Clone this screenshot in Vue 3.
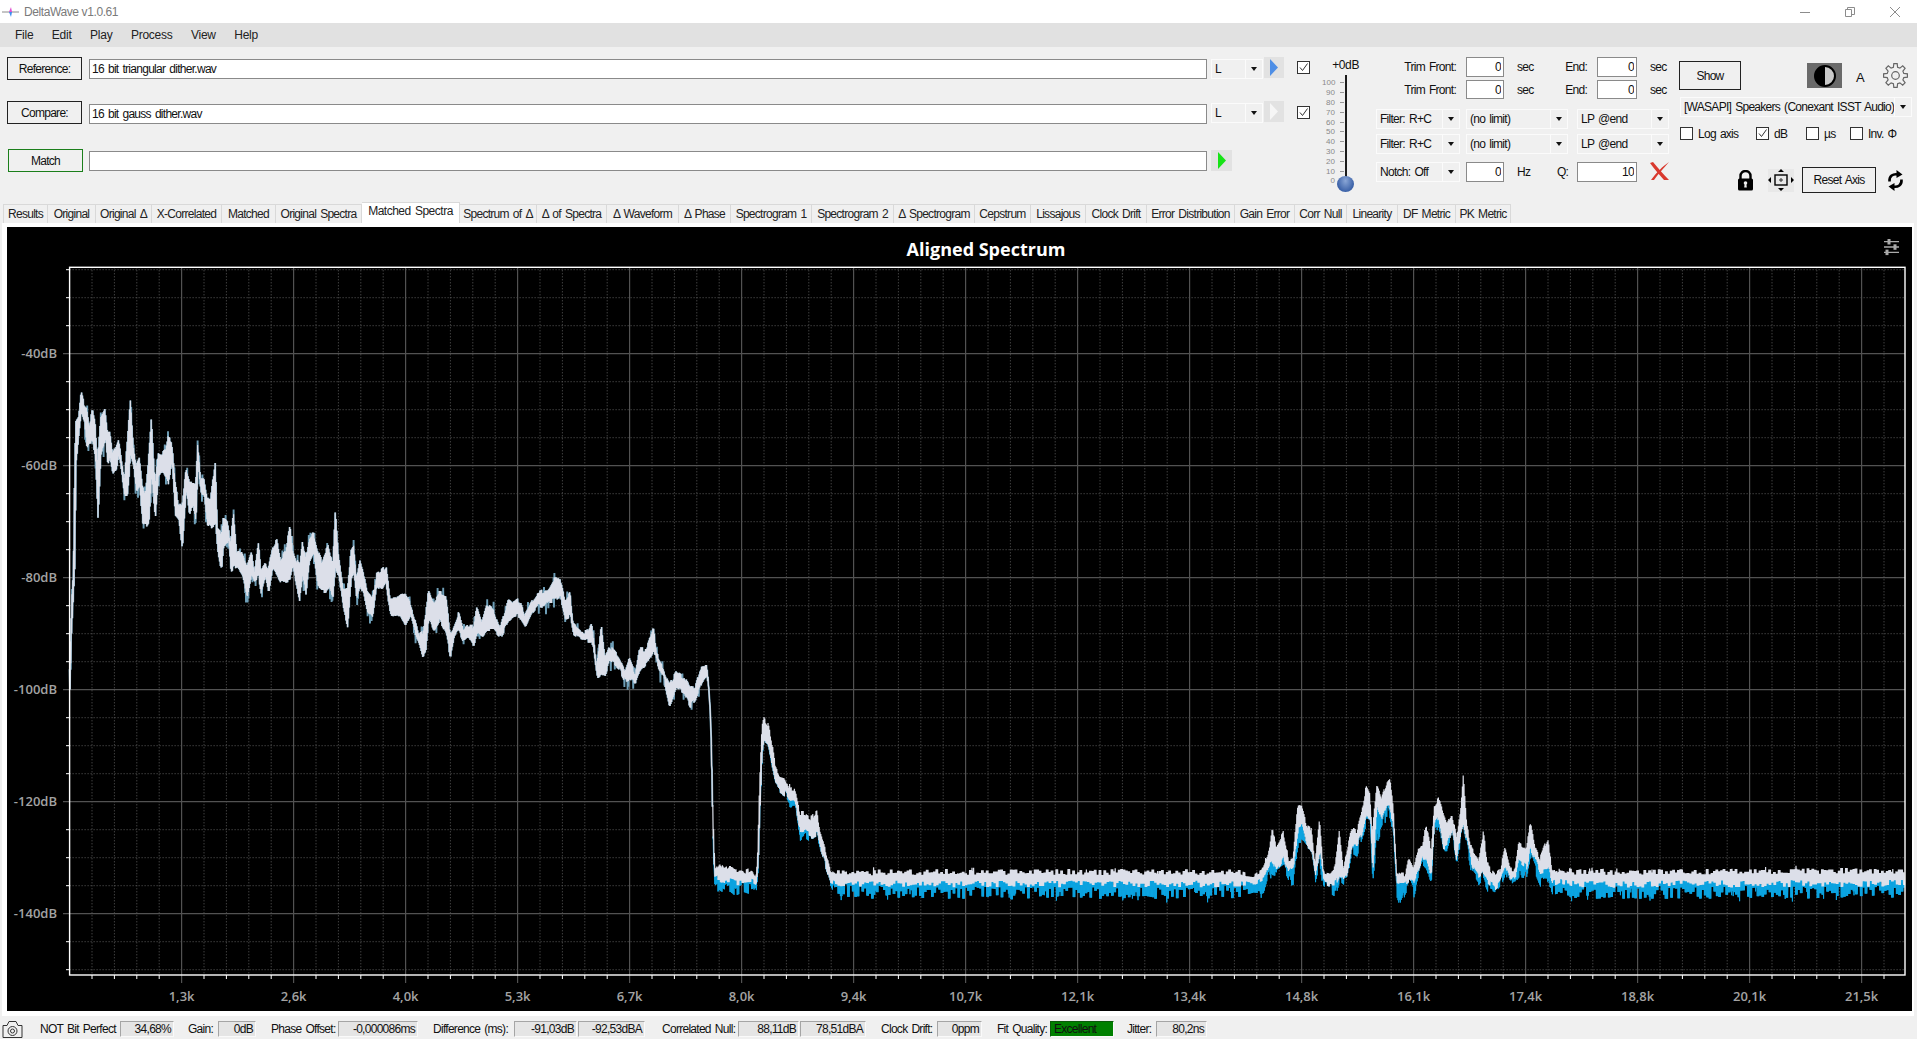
<template>
  <div class="app">
    <header class="titlebar">
      <svg class="app-icon" width="18" height="12" viewBox="0 0 18 12">
        <path d="M0 6h17" stroke="#8a8a8a" stroke-width="1" />
        <path d="M7 6l2-5 1 5z" fill="#e04fd0" />
        <path d="M7 6l2 5 1-5z" fill="#3d8df0" />
      </svg>
      <span class="app-name">DeltaWave v1.0.61</span>
      <div class="win-btns">
        <svg width="10" height="10" viewBox="0 0 10 10"><path d="M0 5.500h10" stroke="#8c8c8c" /></svg>
        <svg width="10" height="10" viewBox="0 0 10 10" fill="none" stroke="#8c8c8c">
          <path d="M.5 2.500h6v7h-6zM2.500 2.500v-2h7v7h-3" />
        </svg>
        <svg width="10" height="10" viewBox="0 0 10 10"><path d="M0 0l10 10M10 0L0 10" stroke="#8c8c8c" /></svg>
      </div>
    </header>

    <nav class="menubar">
      <span v-for="m in menus" :key="m">{{ m }}</span>
    </nav>

    <section class="panel">
      <div class="files">
        <div class="file-row">
          <button class="btn file-btn">Reference:</button>
          <input class="path" value="16 bit triangular dither.wav" readonly />
          <div class="combo ch"><span>L</span><i></i></div>
          <div class="play"><svg width="10" height="17" viewBox="0 0 10 17"><path d="M1 0l8 8.500-8 8.500z" fill="#4f8fe6" /></svg></div>
        </div>
        <div class="file-row second">
          <button class="btn file-btn">Compare:</button>
          <input class="path" value="16 bit gauss dither.wav" readonly />
          <div class="combo ch"><span>L</span><i></i></div>
          <div class="play"><svg width="10" height="17" viewBox="0 0 10 17"><path d="M1 0l8 8.500-8 8.500z" fill="#f6f6f6" /></svg></div>
        </div>
        <div class="file-row third">
          <button class="btn file-btn match">Match</button>
          <input class="path" value="" readonly />
          <div class="play green"><svg width="10" height="17" viewBox="0 0 10 17"><path d="M1 0l8 8.500-8 8.500z" fill="#16e316" /></svg></div>
        </div>
      </div>

      <div class="file-checks">
        <span class="check on"><svg viewBox="0 0 11 11"><path d="M2 5.500l2.500 3L9.500 1.500" fill="none" stroke="#333" /></svg></span>
        <span class="check on"><svg viewBox="0 0 11 11"><path d="M2 5.500l2.500 3L9.500 1.500" fill="none" stroke="#333" /></svg></span>
      </div>

      <div class="level">
        <div class="level-title">+0dB</div>
        <div class="scale">
          <div v-for="s in levelScale" :key="s" class="scale-row"><span>{{ s }}</span><i></i></div>
          <div class="track"></div>
          <div class="thumb"></div>
        </div>
      </div>

      <div class="trim">
        <div class="trim-row">
          <label class="trim-label">Trim Front:</label>
          <input class="num w38" value="0" readonly />
          <span class="unit">sec</span>
          <label class="end-label">End:</label>
          <input class="num w40" value="0" readonly />
          <span class="unit">sec</span>
        </div>
        <div class="trim-row row2">
          <label class="trim-label">Trim Front:</label>
          <input class="num w38" value="0" readonly />
          <span class="unit">sec</span>
          <label class="end-label">End:</label>
          <input class="num w40" value="0" readonly />
          <span class="unit">sec</span>
        </div>
        <div class="filter-row first">
          <div class="combo f1"><span>Filter: R+C</span><i></i></div>
          <div class="combo f2"><span>(no limit)</span><i></i></div>
          <div class="combo f3"><span>LP @end</span><i></i></div>
        </div>
        <div class="filter-row next">
          <div class="combo f1"><span>Filter: R+C</span><i></i></div>
          <div class="combo f2"><span>(no limit)</span><i></i></div>
          <div class="combo f3"><span>LP @end</span><i></i></div>
        </div>
        <div class="notch-row">
          <div class="combo f1"><span>Notch: Off</span><i></i></div>
          <input class="num w38" value="0" readonly />
          <span class="unit">Hz</span>
          <label class="q-label">Q:</label>
          <input class="num w60" value="10" readonly />
          <svg class="red-x" width="19" height="18" viewBox="0 0 19 18" fill="#d9392e">
            <path d="M0 1l3-1c5 6 10 12 16 18h-5C9 12 4 7 0 1z" />
            <path d="M19 0C13 4 6 11 1 18h3C8 12 14 6 19 0z" />
          </svg>
        </div>
      </div>

      <div class="side">
        <div class="show-row">
          <button class="btn show">Show</button>
          <div class="contrast">
            <svg width="24" height="24" viewBox="0 0 24 24">
              <circle cx="12" cy="12" r="10" fill="#c9c9c9" stroke="#000" stroke-width="2" />
              <path d="M12 2a10 10 0 0 0 0 20z" fill="#000" />
            </svg>
          </div>
          <span class="auto">A</span>
          <svg class="gear" width="25" height="25" viewBox="0 0 25 25">
            <path :d="gearPath" fill="none" stroke="#666" stroke-width="1.200" />
            <circle cx="12.500" cy="12.500" r="3.800" fill="none" stroke="#666" stroke-width="1.200" />
          </svg>
        </div>
        <div class="combo device"><span>[WASAPI] Speakers (Conexant ISST Audio)</span><i></i></div>
        <div class="axis-opts">
          <span class="opt log"><span class="check"></span>Log axis</span>
          <span class="opt db">
            <span class="check on"><svg viewBox="0 0 11 11"><path d="M2 5.500l2.500 3L9.500 1.500" fill="none" stroke="#333" /></svg></span>dB
          </span>
          <span class="opt us"><span class="check"></span>µs</span>
          <span class="opt inv"><span class="check"></span>Inv. Φ</span>
        </div>
        <div class="axis-tools">
          <svg width="17" height="21" viewBox="0 0 17 21">
            <path d="M3.500 9V6a5 5 0 0 1 10 0v3" fill="none" stroke="#000" stroke-width="2.400" />
            <rect x="1" y="8.500" width="15" height="12" rx="1.500" fill="#000" />
            <circle cx="8.500" cy="13" r="1.800" fill="#eee" />
            <path d="M7.700 13.500h1.600l.5 4h-2.600z" fill="#eee" />
          </svg>
          <div class="move">
            <svg width="26" height="22" viewBox="0 0 26 22">
              <path d="M13 0l3 3h-6zM13 22l-3-3h6zM0 11l3-3v6zM26 11l-3 3V8z" fill="#000" />
              <rect x="7" y="6" width="12" height="10" fill="none" stroke="#000" stroke-width="1.400" />
              <path d="M13 9v4M11 11h4" stroke="#333" />
            </svg>
          </div>
          <button class="btn reset">Reset Axis</button>
          <svg class="refresh" width="17" height="23" viewBox="0 0 17 23">
            <path d="M2.500 12.500C2 7 6 4.500 11 5.500" fill="none" stroke="#000" stroke-width="2.600" />
            <path d="M9.500 1l6 4.500-6 3.500z" fill="#000" />
            <path d="M14.500 10.500C15 16 11 18.500 6 17.500" fill="none" stroke="#000" stroke-width="2.600" />
            <path d="M7.500 22l-6-4.500 6-3.500z" fill="#000" />
          </svg>
        </div>
      </div>
    </section>

    <div class="tabs">
      <div
        v-for="t in tabs"
        :key="t.name"
        class="tab"
        :class="{ active: t.name === activeTab }"
        :style="{ width: t.w + 'px' }"
      >{{ t.name }}</div>
    </div>

    <main class="tab-page">
      <div class="plot">
        <svg class="chart" viewBox="7 227 1905 784" width="1905" height="784">
          <text x="986" y="256" class="chart-title" text-anchor="middle">Aligned Spectrum</text>
          <g stroke="#aaa" stroke-width="1.300">
            <path d="M1884 241.700h15M1884 247h15M1884 252.300h15" />
          </g>
          <g fill="#aaa">
            <rect x="1887.500" y="239" width="3" height="5.500" />
            <rect x="1893.500" y="244.300" width="3" height="5.500" />
            <rect x="1885.500" y="249.600" width="3" height="5.500" />
          </g>

          <path :d="minorGrid" stroke="#5c5c5c" stroke-width="1" stroke-dasharray="1 2" fill="none" />
          <path :d="majorGrid" stroke="#525252" stroke-width="1.200" fill="none" />

          <path :d="traces.edge" stroke="#6f9fb8" stroke-width="1.900" fill="none" />
          <path :d="traces.blue" stroke="#0ba5e3" stroke-width="1" fill="none" />
          <path :d="traces.light" stroke="#dcdfe9" stroke-width="1.200" fill="none" />

          <path :d="axisTicks" stroke="#fff" stroke-width="1" fill="none" />
          <rect x="69.600" y="267.300" width="1835.400" height="707.700" fill="none" stroke="#fff" stroke-width="1.400" />

          <text v-for="l in yLabels" :key="l.text" x="57" :y="l.y + 4" class="axis-label" text-anchor="end">{{ l.text }}</text>
          <text v-for="l in xLabels" :key="l.text" :x="l.x" y="1001" class="axis-label" text-anchor="middle">{{ l.text }}</text>
        </svg>
      </div>
    </main>

    <footer class="status">
      <svg class="camera" width="21" height="18" viewBox="0 0 21 18" fill="none" stroke="#333">
        <path d="M1 5.500h4l2-4h7l2 4h4v12H1z" />
        <circle cx="10.500" cy="11" r="4.500" />
        <circle cx="10.500" cy="11" r="2" />
      </svg>
      <div v-for="s in stats" :key="s.label" class="stat" :style="{ marginLeft: s.gap + 'px' }">
        <span class="stat-label" :style="{ width: s.lw + 'px' }">{{ s.label }}</span>
        <span
          v-for="f in s.fields"
          :key="f.v"
          class="field"
          :class="{ good: f.good }"
          :style="{ width: f.w + 'px' }"
        >{{ f.v }}</span>
      </div>
    </footer>
  </div>
</template>

<script setup>
const menus = ['File', 'Edit', 'Play', 'Process', 'View', 'Help']
const levelScale = [100, 90, 80, 70, 60, 50, 40, 30, 20, 10, 0]
const activeTab = 'Matched Spectra'

const tabs = [
  { name: 'Results', w: 45 }, { name: 'Original', w: 48 }, { name: 'Original Δ', w: 56 },
  { name: 'X-Correlated', w: 70 }, { name: 'Matched', w: 54 }, { name: 'Original Spectra', w: 86 },
  { name: 'Matched Spectra', w: 98 }, { name: 'Spectrum of Δ', w: 77 }, { name: 'Δ of Spectra', w: 70 },
  { name: 'Δ Waveform', w: 72 }, { name: 'Δ Phase', w: 52 }, { name: 'Spectrogram 1', w: 81 },
  { name: 'Spectrogram 2', w: 82 }, { name: 'Δ Spectrogram', w: 81 }, { name: 'Cepstrum', w: 56 },
  { name: 'Lissajous', w: 55 }, { name: 'Clock Drift', w: 61 }, { name: 'Error Distribution', w: 88 },
  { name: 'Gain Error', w: 60 }, { name: 'Corr Null', w: 52 }, { name: 'Linearity', w: 51 },
  { name: 'DF Metric', w: 58 }, { name: 'PK Metric', w: 55 }
]

const stats = [
  { label: 'NOT Bit Perfect', gap: 17, lw: 79, fields: [{ v: '34,68%', w: 54 }] },
  { label: 'Gain:', gap: 14, lw: 29, fields: [{ v: '0dB', w: 38 }] },
  { label: 'Phase Offset:', gap: 15, lw: 66, fields: [{ v: '-0,000086ms', w: 80 }] },
  { label: 'Difference (ms):', gap: 15, lw: 80, fields: [{ v: '-91,03dB', w: 63 }, { v: '-92,53dBA', w: 67 }] },
  { label: 'Correlated Null:', gap: 17, lw: 75, fields: [{ v: '88,11dB', w: 61 }, { v: '78,51dBA', w: 66 }] },
  { label: 'Clock Drift:', gap: 15, lw: 55, fields: [{ v: '0ppm', w: 45 }] },
  { label: 'Fit Quality:', gap: 15, lw: 52, fields: [{ v: 'Excellent', w: 64, good: true }] },
  { label: 'Jitter:', gap: 13, lw: 28, fields: [{ v: '80,2ns', w: 51 }] }
]

// gear outline, 8 teeth
function makeGear(cx, cy, ro, ri, teeth) {
  const pts = []
  for (let i = 0; i < teeth; i++) {
    const a = (i / teeth) * Math.PI * 2
    const step = (Math.PI * 2) / teeth
    for (const [off, r] of [[-0.32, ri], [-0.18, ro], [0.18, ro], [0.32, ri]]) {
      const t = a + off * step
      pts.push((cx + Math.cos(t) * r).toFixed(1) + ' ' + (cy + Math.sin(t) * r).toFixed(1))
    }
  }
  return 'M' + pts.join('L') + 'Z'
}
const gearPath = makeGear(12.5, 12.5, 12, 8.6, 8)

// grid is drawn in page pixels
const X0 = 69.6, X1 = 1905, Y0 = 267.3, Y1 = 975
const xMajorAt = k => 181.6 + 112 * k
const yMinorAt = k => 969.7 - 28 * k

let minor = ''
let major = ''
let ticks = ''
for (let k = 1; X0 + k * 22.4 < X1; k++) {
  const x = X0 + k * 22.4
  if (k % 5 === 0) {
    major += `M${x} ${Y0}V983`
  } else {
    minor += `M${x} ${Y0}V${Y1}`
    ticks += `M${x} ${Y1}v4`
  }
}
for (let k = 0; yMinorAt(k) > Y0; k++) {
  const y = yMinorAt(k)
  if (k % 4 === 2) {
    major += `M63 ${y}H${X1}`
  } else {
    minor += `M${X0} ${y}H${X1}`
    ticks += `M66 ${y}h3.600`
  }
}
const minorGrid = minor
const majorGrid = major
const axisTicks = ticks

const yLabels = [-40, -60, -80, -100, -120, -140].map((v, i) => ({ text: v + 'dB', y: 353.7 + i * 112 }))
const xLabels = ['1,3k', '2,6k', '4,0k', '5,3k', '6,7k', '8,0k', '9,4k', '10,7k', '12,1k', '13,4k', '14,8k', '16,1k', '17,4k', '18,8k', '20,1k', '21,5k']
  .map((text, k) => ({ text, x: xMajorAt(k) }))

// trace envelope read off the plot: [x, top, bottom, blue bottom] at 3x, with crop origin
const envelope = [
  { ox: 60, oy: 380, pts: [[30,780,790],[33,720,780],[36,630,720],[40,560,640],[44,260,560],[47,120,260],[55,110,170],[63,30,100],[72,65,130],[80,75,210],[88,130,190],[97,85,200],[105,120,240],[113,230,430],[122,110,230],[135,85,180],[142,150,265],[150,150,240],[158,215,285],[168,190,270],[176,168,235],[185,240,300],[193,300,360],[200,200,360],[211,52,240],[220,190,275],[228,250,340],[238,228,320],[247,310,440],[256,330,448],[266,220,430],[274,110,300],[285,300,418],[295,205,300],[305,215,280],[315,205,300],[323,165,320],[335,175,250],[345,300,420],[355,360,430],[366,370,515],[378,265,330],[388,300,415],[398,300,380],[407,300,435],[413,180,270],[422,290,350],[432,290,355],[441,350,440],[452,350,450],[466,235,440],[472,440,515],[484,450,580],[490,405,500],[505,425,490],[512,490,578],[520,382,570],[530,510,565],[545,505,590],[561,545,660],[575,503,590],[583,565,610],[595,475,600],[603,570,645],[615,545,600],[625,560,650],[637,495,570],[650,470,590],[662,530,610],[675,510,610],[690,430,605],[698,500,570],[708,530,620],[718,550,665],[727,475,600],[737,530,650],[747,470,560],[760,450,530],[772,500,630],[785,535,640],[795,510,640],[805,490,630],[818,550,660],[826,382,570],[835,515,590],[850,620,700],[862,615,750],[873,505,600],[881,492,580],[889,590,660],[900,530,625],[910,570,650],[920,625,700],[937,650,720],[950,575,625],[965,565,640],[978,550,620]] },
  { ox: 380, oy: 540, pts: [[30,170,230],[45,170,235],[60,155,235],[75,150,265],[90,185,230],[105,230,290],[118,280,325],[128,270,365],[137,220,335],[145,135,240],[160,180,280],[178,152,250],[197,158,290],[210,270,355],[222,250,300],[236,212,280],[250,265,310],[265,250,300],[280,250,325],[290,188,290],[305,235,300],[320,185,280],[342,205,280],[360,260,300],[385,172,250],[400,185,240],[417,172,235],[435,220,268],[455,180,225],[470,155,205],[490,145,210],[505,140,190],[520,112,190],[540,112,175],[555,175,240],[570,152,235],[580,245,290],[600,265,305],[620,270,310],[635,245,310],[650,370,420],[664,250,410],[675,345,410],[688,310,370],[715,345,390],[735,390,430],[748,352,425],[765,395,438],[778,320,400],[800,320,375],[820,260,335],[835,355,390],[850,380,420],[868,425,505],[890,388,450],[912,405,465],[930,437,505],[945,440,485],[965,365,430],[980,365,410],[985,410,460],[990,500,520]] },
  { ox: 690, oy: 660, pts: [[63,210,290],[65,290,410],[68,410,530],[72,530,660],[75,620,655,695],[90,600,655,680],[105,625,660,690],[120,610,660,680],[135,625,665,695],[155,620,665,685],[170,630,665,690],[185,620,665,695],[198,640,670,680],[202,600,640,640],[205,500,600,600],[208,390,500,500],[212,280,390,390],[216,190,280,280],[222,168,250,250],[235,190,260,260],[245,240,320,320],[255,310,370,370],[270,340,390,395],[285,345,400,405],[300,385,425,430],[310,378,420,425],[320,410,460,462],[330,455,520,540],[345,455,515,525],[365,470,525,540],[380,445,520,525],[392,515,570,570],[405,560,610,610],[420,620,660,662],[435,632,668,695]] },
  { ox: 0, oy: 0, pts: [[2700,2610,2650,2685],[3700,2610,2650,2680]] },
  { ox: 1240, oy: 750, pts: [[0,360,400,430],[40,375,395,425],[70,350,385,430],[85,310,340,375],[97,220,330,370],[108,290,360,375],[130,245,320,360],[145,320,370,395],[160,315,350,390],[172,170,240,290],[185,165,230,290],[200,220,290,310],[215,230,300,305],[225,330,370,385],[238,200,300,330],[250,360,395,420],[270,365,400,420],[285,350,400,430],[298,235,370,380],[310,360,380,390],[320,300,370,390],[335,230,280,300],[350,240,280,310],[365,180,250,260],[378,105,190,210],[390,130,200,220],[397,240,370,390],[410,100,170,270],[425,140,210,235],[440,90,170,180],[450,75,170,210],[460,170,250,270],[470,360,400,440],[480,370,400,470],[495,370,400,420],[507,310,390,400],[520,340,400,430],[535,290,360,370],[548,285,320,340],[558,210,320,350],[573,290,380,405],[583,160,220,230],[595,140,200,220],[610,190,290,300],[620,220,285,300],[635,185,240,250],[650,260,330,355],[662,180,240,250],[670,70,220,240],[680,220,270,280],[695,290,350,370],[715,320,380,400],[730,245,365,380],[745,345,395,420],[765,370,410,430],[780,355,390,410],[795,290,350,370],[810,350,395,415],[825,350,385,395],[835,270,330,380],[860,290,350,385],[870,205,290,320],[885,285,330,360],[900,320,370,395],[925,255,360,380],[935,360,400,430],[960,350,390,425],[1000,360,400,430]] },
  { ox: 0, oy: 0, pts: [[4740,2610,2652,2682],[5712,2606,2648,2680]] }
]

const knots = [[69.6, 665, 692, 692], [70.3, 640, 670, 670]]
for (const seg of envelope) {
  for (const [x, t, b, bl] of seg.pts) {
    knots.push([seg.ox + x / 3, seg.oy + t / 3, seg.oy + b / 3, seg.oy + (bl === undefined ? b : bl) / 3])
  }
}
knots.sort((a, b) => a[0] - b[0])

function mulberry(seed) {
  return () => {
    seed = (seed + 0x6d2b79f5) | 0
    let t = Math.imul(seed ^ (seed >>> 15), 1 | seed)
    t = (t + Math.imul(t ^ (t >>> 7), 61 | t)) ^ t
    return ((t ^ (t >>> 14)) >>> 0) / 4294967296
  }
}

function buildTraces() {
  const rnd = mulberry(41)
  const step = 0.8
  let light = ''
  let blue = ''
  let edge = ''
  let j = 0
  // the floor noise changes every few samples, not at every sample
  let nTop = 0, nBot = 0, nBlue = 0
  const cmd = s => (s === '' ? 'M' : 'L')
  let n = 0
  for (let x = 69.6; x <= 1904; x += step, n++) {
    while (j < knots.length - 2 && knots[j + 1][0] < x) j++
    const a = knots[j]
    const b = knots[j + 1]
    const f = Math.min(1, Math.max(0, (x - a[0]) / (b[0] - a[0])))
    const top = a[1] + (b[1] - a[1]) * f
    const bot = a[2] + (b[2] - a[2]) * f
    const low = a[3] + (b[3] - a[3]) * f
    const noisy = x > 712
    const spread = Math.max(0, bot - top)
    if (n % 3 === 0) {
      nTop = rnd()
      nBot = rnd()
      nBlue = rnd()
    }
    const xa = x.toFixed(1)
    const xb = (x + 0.4).toFixed(1)
    if (noisy) {
      const t = top - 1 + nTop * Math.min(6, spread * 0.5) - (rnd() > 0.985 ? 3 : 0)
      const u = bot + 4 - nBot * Math.min(7, spread * 0.5)
      const v = Math.max(u, low + 5 - nBlue * 13 + (rnd() > 0.97 ? 4 : 0))
      light += `${cmd(light)}${xa} ${t.toFixed(1)}L${xb} ${u.toFixed(1)}`
      blue += `${cmd(blue)}${xa} ${(u - 2).toFixed(1)}L${xb} ${v.toFixed(1)}`
    } else {
      const t = top + nTop * Math.min(5, spread * 0.35)
      const u = bot - nBot * Math.min(5, spread * 0.35)
      // thin hairs stick out past the pale band
      const hairTop = rnd() > 0.92 ? t - 3 - rnd() * 5 : t
      const hairBot = rnd() > 0.9 ? u + 3 + rnd() * 8 : u
      light += `${cmd(light)}${xa} ${t.toFixed(1)}L${xb} ${u.toFixed(1)}`
      edge += `${cmd(edge)}${xa} ${hairTop.toFixed(1)}L${xb} ${hairBot.toFixed(1)}`
    }
  }
  return { light, blue, edge }
}
const traces = buildTraces()
</script>

<style>
html, body { margin: 0; background: #f0f0f0; }
</style>

<style scoped>
.app {
  width: 1917px;
  height: 1039px;
  display: flex;
  flex-direction: column;
  overflow: hidden;
  background: #f0f0f0;
  color: #111;
  font: 12px "Liberation Sans", Arial, sans-serif;
  letter-spacing: -0.72px;
  word-spacing: 1.4px;
}
.titlebar {
  height: 23px;
  flex: none;
  background: #fff;
  display: flex;
  align-items: center;
  letter-spacing: -0.4px;
  word-spacing: 0;
}
.app-icon { margin: 1px 4px 0 2px; }
.app-name { color: #7a7a7a; }
.win-btns { margin-left: auto; display: flex; gap: 35px; padding-right: 17px; }

.menubar {
  height: 24px;
  flex: none;
  background: #e1e1e1;
  display: flex;
  align-items: center;
  gap: 18.5px;
  padding-left: 15px;
  color: #222;
  letter-spacing: -0.25px;
}

.panel {
  height: 155px;
  flex: none;
  display: flex;
  align-items: flex-start;
}
.btn {
  box-sizing: border-box;
  border: 1px solid #222;
  background: #f0f0f0;
  color: #111;
  font: inherit;
  letter-spacing: inherit;
  word-spacing: inherit;
  padding: 0;
}
.files { width: 1277px; margin-left: 7px; padding-top: 10px; }
.file-row { display: flex; align-items: flex-start; }
.file-row.second { margin-top: 21px; }
.file-row.third { margin-top: 25px; }
.file-btn { width: 75px; height: 23px; margin-right: 7px; }
.match { border-color: #1b7f1b; margin-left: 1px; margin-right: 6px; }
.path {
  width: 1118px;
  height: 20px;
  margin: 2px 4px 0 0;
  box-sizing: border-box;
  border: 1px solid #8a8a8a;
  background: #fff;
  padding: 0 2px;
  font: inherit;
  letter-spacing: inherit;
  word-spacing: inherit;
  color: #111;
  outline: none;
}
.file-row.second .path { margin-top: 3px; }
.combo {
  box-sizing: border-box;
  height: 20px;
  display: flex;
  align-items: center;
  border: 1px solid #fbfbfb;
  background: #f0f0f0;
  padding-left: 3px;
  position: relative;
}
.combo span { flex: 1; min-width: 0; white-space: nowrap; }
.combo i {
  width: 17px;
  height: 100%;
  flex: none;
  border-left: 1px solid #fbfbfb;
  box-sizing: border-box;
  position: relative;
}
.combo i::after {
  content: "";
  position: absolute;
  left: 5px;
  top: 7px;
  border: 3px solid transparent;
  border-top: 4px solid #111;
  border-bottom: 0;
}
.ch { width: 52px; margin-top: 2px; margin-right: 1px; }
.play {
  width: 20px;
  height: 21px;
  background: #e2e2e2;
  display: flex;
  align-items: center;
  justify-content: center;
}
.play.green { margin-top: 1px; width: 21px; }

.file-checks {
  width: 13px;
  margin-left: 13px;
  padding-top: 14px;
  display: flex;
  flex-direction: column;
  gap: 32px;
}
.check {
  width: 13px;
  height: 13px;
  flex: none;
  box-sizing: border-box;
  border: 1px solid #333;
  background: #fff;
  display: inline-block;
}
.check svg { display: block; width: 11px; height: 11px; }

.level { width: 38px; margin-left: 12px; padding-top: 12px; }
.level-title { text-align: right; padding-right: 1px; height: 16px; line-height: 13px; letter-spacing: -0.4px; }
.scale { position: relative; height: 110px; padding-top: 3px; }
.scale-row {
  height: 9.8px;
  display: flex;
  align-items: center;
  color: #8a8a8a;
  font-size: 8px;
  letter-spacing: 0;
}
.scale-row span { width: 13px; text-align: right; }
.scale-row i { width: 4px; height: 1px; background: #999; margin-left: 5px; }
.track {
  position: absolute;
  left: 23px;
  top: 0;
  width: 2px;
  height: 102px;
  background: #1c1c1c;
}
.thumb {
  position: absolute;
  left: 15px;
  top: 101px;
  width: 17px;
  height: 16px;
  border-radius: 50%;
  background: radial-gradient(ellipse at 50% 30%, #8aa6d6, #3c62a8 70%, #2b4a88);
}

.trim { width: 293px; margin-left: 16px; padding-top: 10px; }
.trim-row, .filter-row, .notch-row { display: flex; align-items: center; }
.trim-row { height: 20px; }
.trim-row.row2 { margin-top: 3px; height: 19px; }
.trim-label { width: 80px; text-align: right; margin-right: 10px; }
.num {
  box-sizing: border-box;
  height: 100%;
  border: 1px solid #8a8a8a;
  background: #fff;
  padding: 0 2px;
  text-align: right;
  font: inherit;
  letter-spacing: inherit;
  color: #111;
  outline: none;
  flex: none;
}
.w38 { width: 38px; }
.w40 { width: 40px; }
.w60 { width: 60px; }
.unit { width: 13px; margin-left: 13px; white-space: nowrap; }
.trim-row .end-label { margin-left: 30px; width: 27px; text-align: right; margin-right: 10px; }
.filter-row.first { margin-top: 10px; }
.filter-row.next { margin-top: 5px; }
.f1 { width: 84px; margin-right: 6px; flex: none; }
.f2 { width: 102px; margin-right: 9px; flex: none; }
.f3 { width: 92px; flex: none; }
.notch-row { margin-top: 8px; height: 20px; }
.q-label { width: 12px; margin-left: 27px; margin-right: 8px; }
.red-x { margin-left: 13px; margin-top: -3px; }

.side { width: 233px; margin-left: 10px; }
.show-row { display: flex; align-items: flex-start; padding-top: 14px; height: 29px; }
.show { width: 62px; height: 29px; }
.contrast {
  width: 35px;
  height: 25px;
  margin-left: 66px;
  margin-top: 2px;
  background: #6a6a6a;
  display: flex;
  align-items: center;
  justify-content: center;
}
.auto { font-size: 13px; width: 12px; margin: 9px 0 0 14px; }
.gear { margin: 2px 0 0 15px; }
.device { margin: 7px 0 0 1px; width: 232px; height: 20px; }
.axis-opts { height: 13px; margin-top: 10px; display: flex; }
.opt { display: flex; align-items: center; gap: 5px; white-space: nowrap; }
.log { margin-left: 1px; width: 76px; }
.db { width: 50px; }
.us { width: 44px; }
.axis-tools { display: flex; align-items: center; margin-top: 27px; margin-left: 58px; height: 26px; }
.move {
  width: 26px;
  height: 23px;
  margin: 0 8px 0 14px;
  background: #e8e8e8;
  display: flex;
  align-items: center;
  justify-content: center;
}
.reset { width: 74px; height: 26px; }
.refresh { margin-left: 11px; }

.tabs {
  height: 21px;
  flex: none;
  display: flex;
  align-items: flex-end;
  padding-left: 3px;
}
.tab {
  box-sizing: border-box;
  height: 19px;
  flex: none;
  border: 1px solid #d9d9d9;
  border-bottom: 0;
  border-left-width: 0;
  background: #f0f0f0;
  line-height: 18px;
  text-align: center;
  white-space: nowrap;
  color: #222;
}
.tab:first-child { border-left-width: 1px; }
.tab.active {
  height: 21px;
  background: #fff;
  line-height: 17px;
  letter-spacing: -0.5px;
}

.tab-page {
  height: 793px;
  flex: none;
  margin: 0 3px 0 2px;
  box-sizing: border-box;
  background: #fff;
  padding: 4px 0 5px 5px;
}
.plot { width: 1905px; height: 784px; background: #000; }
.chart { display: block; }
.chart-title {
  fill: #fff;
  font: 700 18px "Open Sans", sans-serif;
  letter-spacing: 0;
  word-spacing: 0;
}
.axis-label {
  fill: #a3a3a3;
  font: 600 13px "Open Sans", sans-serif;
  letter-spacing: 0;
}

.status {
  flex: 1;
  display: flex;
  align-items: flex-start;
  padding: 5px 0 0 2px;
}
.camera { margin-top: -1px; flex: none; }
.stat { display: flex; align-items: center; height: 16px; flex: none; gap: 1px; }
.stat-label { white-space: nowrap; flex: none; }
.field {
  box-sizing: border-box;
  flex: none;
  height: 16px;
  line-height: 14px;
  background: #e5e5e5;
  border: 1px solid;
  border-color: #a5a5a5 #fafafa #fafafa #a5a5a5;
  text-align: right;
  padding-right: 2px;
  white-space: nowrap;
}
.field.good {
  background: #008000;
  text-align: left;
  padding: 0 0 0 3px;
  color: #111;
  border-color: #0a5a0a #fafafa #fafafa #0a5a0a;
}
</style>
